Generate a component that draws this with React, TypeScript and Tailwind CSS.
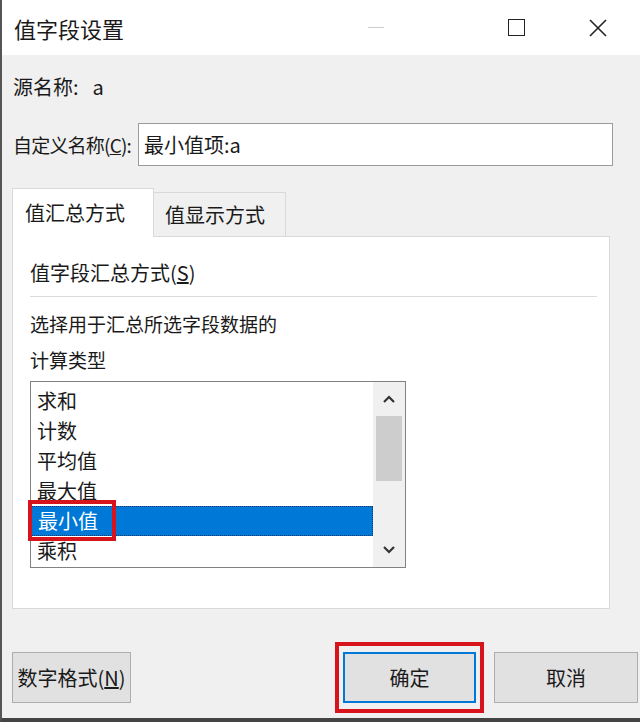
import React from "react";

const font = { fontFamily: '"Noto Sans CJK SC", "Noto Sans", sans-serif' };

function Chevron({ up }: { up?: boolean }) {
  return (
    <svg width="14" height="10" viewBox="0 0 14 10">
      <path
        d={up ? "M2 8 L7 3 L12 8" : "M2 2 L7 7 L12 2"}
        fill="none"
        stroke="#333"
        strokeWidth="2.2"
      />
    </svg>
  );
}

export default function App() {
  const items = ["求和", "计数", "平均值", "最大值", "最小值", "乘积"];
  return (
    <div
      className="w-[640px] h-[722px] bg-[#f0f0f0] flex flex-col border-l-2 border-[#555] border-b-4 border-b-[#444] text-[#1a1a1a] overflow-hidden leading-none whitespace-nowrap"
      style={font}
    >
      {/* title bar */}
      <div className="h-[55px] bg-white flex items-center shrink-0">
        <div className="pl-[12px] text-[22px] leading-none">值字段设置</div>
        <div className="flex-1" />
        <div className="w-[40px] flex justify-center mr-[100px]">
          <div className="w-[16px] h-[1px] bg-[#cccccc]" />
        </div>
        <div className="w-[40px] flex justify-center mr-[42px]">
          <div className="w-[17px] h-[17px] border-[1.5px] border-[#222]" />
        </div>
        <div className="w-[40px] flex justify-center mr-[22px]">
          <svg width="18" height="18" viewBox="0 0 18 18">
            <path d="M1 1 L17 17 M17 1 L1 17" stroke="#222" strokeWidth="1.6" />
          </svg>
        </div>
      </div>

      <div className="flex flex-col px-[10px]">
        <div className="h-[30px] mt-[17px] flex items-center text-[20px] pl-[1px]">
          源名称:<span className="ml-[14px] text-[20px]">a</span>
        </div>
        <div className="mt-[21px] h-[43px] flex items-center">
          <div className="w-[126px] shrink-0 text-[19px] tracking-[-0.8px] pl-[1px]">
            自定义名称(<span className="underline">C</span>):
          </div>
          <div className="w-[475px] shrink-0 h-[43px] bg-white border border-[#9b9b9b] flex items-center pl-[5px] text-[20px]">
            最小值项:a
          </div>
        </div>

        {/* tabs */}
        <div className="mt-[22px] flex items-end h-[49px]">
          <div className="w-[142px] h-[49px] bg-white border border-[#d9d9d9] border-b-0 flex items-center pl-[12px] text-[20px] relative z-10">
            值汇总方式
          </div>
          <div className="w-[132px] h-[45px] bg-[#f0f0f0] border border-[#d9d9d9] border-l-0 border-b-0 flex items-center pl-[11px] text-[20px]">
            值显示方式
          </div>
        </div>
        <div className="w-[598px] h-[373px] bg-white border border-[#d9d9d9] -mt-px flex flex-col px-[17px]">
          <div className="mt-[22px] h-[28px] flex items-center text-[20px]">
            值字段汇总方式(<span className="underline">S</span>)
          </div>
          <div className="mt-[9px] h-[1px] bg-[#dcdcdc] mr-[-5px]" />
          <div className="mt-[12px] h-[28px] flex items-center text-[19px]">
            选择用于汇总所选字段数据的
          </div>
          <div className="mt-[8px] h-[28px] flex items-center text-[19px]">
            计算类型
          </div>
          {/* listbox */}
          <div className="mt-[8px] w-[376px] h-[187px] border border-[#828282] bg-white flex">
            <div className="flex-1 flex flex-col pt-[4px]">
              {items.map((t) => (
                <div
                  key={t}
                  className={
                    "h-[30px] flex items-center pl-[6px] text-[20px] " +
                    (t === "最小值"
                      ? "bg-[#0078d7] text-white border border-dotted border-[#1a3a6a] relative"
                      : "")
                  }
                >
                  {t}
                  {t === "最小值" && (
                    <div className="absolute left-[-4px] top-[-7px] w-[88px] h-[41px] border-[4px] border-[#d7141c]" />
                  )}
                </div>
              ))}
            </div>
            <div className="w-[32px] bg-[#f0f0f0] flex flex-col items-center">
              <div className="h-[34px] flex items-center justify-center">
                <Chevron up />
              </div>
              <div className="w-[26px] h-[65px] bg-[#cdcdcd]" />
              <div className="flex-1" />
              <div className="h-[34px] flex items-center justify-center">
                <Chevron />
              </div>
            </div>
          </div>
        </div>

        {/* buttons */}
        <div className="mt-[33px] flex items-center">
          <div className="w-[119px] shrink-0 h-[51px] bg-[#e1e1e1] border border-[#adadad] flex items-center justify-center text-[20px]">
            数字格式(<span className="underline">N</span>)
          </div>
          <div className="ml-[204px] shrink-0 w-[149px] h-[71px] border-[4px] border-[#d7141c] flex items-center justify-center">
            <div className="w-[133px] h-[51px] bg-[#e1e1e1] border-[2px] border-[#0078d7] flex items-center justify-center text-[20px]">
              确定
            </div>
          </div>
          <div className="ml-[10px] shrink-0 w-[144px] h-[51px] bg-[#e1e1e1] border border-[#adadad] flex items-center justify-center text-[20px]">
            取消
          </div>
        </div>
      </div>
    </div>
  );
}
